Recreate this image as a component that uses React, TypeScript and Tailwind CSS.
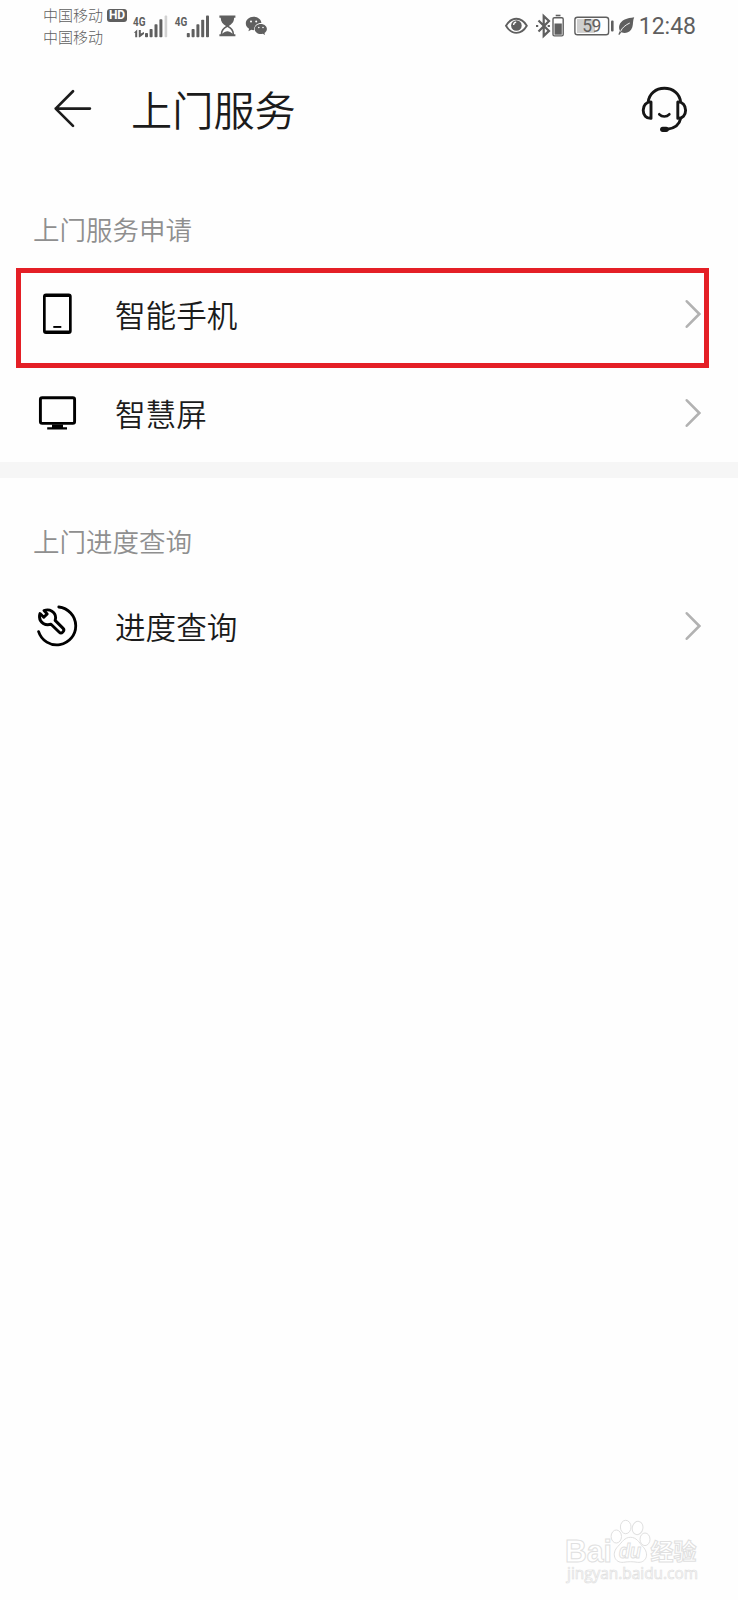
import type { ReactNode } from "react";

function CarrierSignals() {
  return (
    <svg className="ml-[4px] h-[28px] w-[78px]" viewBox="131 11 78 28" fill="#5f5f5f">
      <text x="133" y="25" fontSize="13" fontWeight="700" textLength="12.500" lengthAdjust="spacingAndGlyphs" fontFamily="Roboto, sans-serif">4G</text>
      <path d="M133.800 31.800l3.400-3.200V36.200h-2v-4.500zM138.800 28.900h2V32.600l3.200-1.600v2L139.800 36.200h-1z" />
      <rect x="145" y="32" width="3" height="4.200" rx=".8" />
      <rect x="149.600" y="28" width="3" height="8.200" rx=".8" />
      <rect x="154.500" y="23.300" width="3" height="12.900" rx=".8" />
      <rect x="159.400" y="18.300" width="3" height="17.900" rx=".8" />
      <rect x="164.600" y="14.600" width="2.600" height="21.600" rx=".8" fill="#d2d2d2" />
      <text x="174.800" y="25" fontSize="13" fontWeight="700" textLength="12.500" lengthAdjust="spacingAndGlyphs" fontFamily="Roboto, sans-serif">4G</text>
      <rect x="186.800" y="32" width="3" height="4.200" rx=".8" />
      <rect x="191.600" y="28" width="3" height="8.200" rx=".8" />
      <rect x="196.400" y="23.300" width="3" height="12.900" rx=".8" />
      <rect x="201.200" y="18.800" width="3" height="17.400" rx=".8" />
      <rect x="206" y="14.600" width="3" height="21.600" rx=".8" />
    </svg>
  );
}

function Hourglass() {
  return (
    <svg className="ml-[10px] h-[22px] w-[17px]" viewBox="219 15 17 22" fill="#5f5f5f">
      <path d="M219.400 15.600h16v2.200h-1.300c0 4-2.200 6.400-5.300 8.200 3.100 1.800 5.300 4.200 5.300 8.200h1.300v2h-16v-2h1.300c0-4 2.200-6.400 5.300-8.200-3.100-1.800-5.300-4.200-5.300-8.200h-1.300z" />
      <path d="M222.200 33.800c.2-3 2.400-5.300 5.200-6.800 2.800 1.500 5 3.800 5.200 6.800-1.700-1.700-3.300-2.600-5.200-2.600s-3.500.9-5.200 2.600z" fill="#fff" />
    </svg>
  );
}

function ChatBubbles() {
  return (
    <svg className="ml-[9px] h-[20px] w-[23px]" viewBox="245 16 23 20" fill="#5f5f5f">
      <path d="M253.500 16.800c4.400 0 7.700 2.800 7.900 6.200-4.500 0-7.700 2.900-7.200 7.100-1 .1-1.900 0-2.900-.3l-2.900 1.500.7-2.500c-2-1.200-3.300-3-3.300-5.300 0-3.700 3.400-6.700 7.700-6.700z" />
      <path d="M260.800 23.900c3.400 0 6.100 2.200 6.100 5 0 1.700-1 3.100-2.400 4.100l.5 1.900-2.200-1.200c-4.400 1-8.100-1.500-8.100-4.800 0-2.800 2.700-5 6.100-5z" />
      <g fill="#fff">
        <circle cx="251" cy="21.500" r="1" />
        <circle cx="256.200" cy="21.500" r="1" />
        <circle cx="258.800" cy="27.500" r=".8" />
        <circle cx="263" cy="27.500" r=".8" />
      </g>
    </svg>
  );
}

function StatusRight() {
  return (
    <svg className="h-[28px] w-[132px]" viewBox="504 11.500 132 28" fill="none" stroke="#5f5f5f">
      <path d="M506 25.300c5.400-9.400 15.400-9.400 20.800 0-5.400 9.400-15.400 9.400-20.800 0z" strokeWidth="1.900" />
      <circle cx="516.400" cy="25" r="5.300" fill="#5f5f5f" stroke="none" />
      <path d="M513.600 24.500a3 3 0 0 1 2.600-2.800" stroke="#fff" strokeWidth="1.300" />
      <path d="M538.500 20l10.500 10.400-5.300 5V15.600l5.300 4.900L538.500 31" strokeWidth="2.200" />
      <path d="M536 25.500h2.200M547.700 25.500h2.200" strokeWidth="2" />
      <rect x="553" y="17.200" width="10.200" height="18.200" rx="1.400" strokeWidth="1.400" />
      <path d="M555.700 15h4.800" strokeWidth="1.600" />
      <path d="M554.500 23h7.300v11.200h-7.300z" fill="#5f5f5f" stroke="none" />
      <rect x="574.900" y="16.700" width="33.700" height="17.600" rx="2.600" strokeWidth="1.400" />
      <path d="M577 18.600h18v13.800h-18z" fill="#cfcfcf" stroke="none" />
      <rect x="611" y="20" width="2.600" height="11" rx="1" fill="#5f5f5f" stroke="none" />
      <text x="582.300" y="31.500" fontSize="17.500" textLength="19" fontFamily="Roboto, sans-serif" fill="#5f5f5f" stroke="none">59</text>
      <path d="M634.200 16.800c-7 .9-13.200 2.500-14.900 8.200-.6 2 0 4 .6 5.300l-1.600 3.700 1.300.2 1.600-2.500c5 2 9.400-.2 11.100-5 1.100-3.200.3-6.500 1.900-9.900z" fill="#5f5f5f" stroke="none" />
      <path d="M620.500 31c1.800-4 5-6.500 9.300-8.500" stroke="#fff" strokeWidth=".9" />
    </svg>
  );
}

function BackArrow() {
  return (
    <svg className="h-[40px] w-[40px]" viewBox="53.500 89 40 40" fill="none" stroke="#1c1c1c" strokeWidth="2.700" strokeLinecap="round" strokeLinejoin="round">
      <path d="M73.500 91.300L56.200 108.600l17.300 17.300M56.200 108.600h34.200" />
    </svg>
  );
}

function Headset() {
  return (
    <svg className="h-[48px] w-[50px]" viewBox="639 85 50 48" fill="none" stroke="#161616" strokeWidth="2.900" strokeLinejoin="round">
      <path d="M648.200 102c.8-8.200 7.500-13.800 16.200-13.800s15.400 5.600 16.200 13.800" />
      <path d="M651 101.900v16.500c-4.800.2-7.800-3.400-7.800-8.200s3-8.500 7.800-8.300zM677.800 101.900v16.500c4.800.2 7.800-3.400 7.800-8.200s-3-8.500-7.800-8.300z" />
      <path d="M680.800 118c-1.300 6.300-5.500 10.400-13.600 11.200" />
      <path d="M662.700 129.300h3.500" strokeWidth="5.200" strokeLinecap="round" />
      <path d="M659.300 114.300c2.700 2.900 7.300 2.900 10 0" strokeWidth="2.700" strokeLinecap="round" />
    </svg>
  );
}

function PhoneIcon() {
  return (
    <svg className="h-[42px] w-[42px]" viewBox="36 293 42 42">
      <path fillRule="evenodd" d="M46 293.400h22.700a3 3 0 0 1 3 3v34.700a3 3 0 0 1-3 3H46a3 3 0 0 1-3-3v-34.700a3 3 0 0 1 3-3zM45.700 297v33.400h23.300V297z" />
      <path d="M53.300 326h8v1.900h-8z" />
    </svg>
  );
}

function ScreenIcon() {
  return (
    <svg className="h-[42px] w-[42px]" viewBox="36 392 42 42">
      <rect x="40.400" y="397.800" width="34.200" height="25.600" rx="1.800" fill="none" stroke="#000" strokeWidth="2.900" />
      <path d="M52 424.500h11v2.700h4v2.200H47.200v-2.200H52z" />
    </svg>
  );
}

function RepairIcon() {
  return (
    <svg className="h-[42px] w-[42px]" viewBox="36 604.700 42 42" fill="none" stroke="#000" strokeWidth="2.800" strokeLinecap="round" strokeLinejoin="round">
      <path d="M58.800 606.700a19 19 0 1 1-20.200 24.600" />
      <path strokeWidth="2.900" d="M44 610.300c5.600-2.200 11.600 1.300 11.600 7 0 1-.2 2-.5 2.800l8 8c2.200 2.200-1.600 6-3.800 3.800l-8.300-8c-5.600 1.900-11.200-1.600-11.500-7-.1-1.400.1-2.600.5-3.700l3.800 3.800 3.400-3.400z" />
    </svg>
  );
}

function Chevron() {
  return (
    <svg className="ml-auto h-[30px] w-[18px]" viewBox="0 0 18 30" fill="none" stroke="#b2b2b2" strokeWidth="2.600" strokeLinecap="round" strokeLinejoin="miter">
      <path d="M3.800 2.300L16.300 15 3.800 27.700" />
    </svg>
  );
}

function Row({ icon, label }: { icon: ReactNode; label: string }) {
  return (
    <div className="flex h-[98px] items-center pr-[37px] pl-[36px]">
      {icon}
      <span className="ml-[37px] text-[30.600px] leading-[40px] font-[350] text-[#1b1b1b]">{label}</span>
      <Chevron />
    </div>
  );
}

function SectionLabel({ children }: { children: ReactNode }) {
  return <h2 className="pl-[33px] text-[26.500px] leading-[36px] font-[350] text-[#8f8f8f]">{children}</h2>;
}

function Watermark() {
  return (
    <svg className="mt-auto mr-[36px] mb-[12px] h-[70px] w-[140px] self-end" viewBox="562 1518 140 70" fill="#fff" stroke="#e0e0e0" strokeWidth="1">
      <text x="565" y="1561.500" fontSize="31.500" fontWeight="700" textLength="47" lengthAdjust="spacingAndGlyphs" fontFamily="Liberation Sans, sans-serif">Bai</text>
      <ellipse cx="616.300" cy="1536.500" rx="5.200" ry="6.500" />
      <ellipse cx="625.700" cy="1527" rx="5.300" ry="6.700" />
      <ellipse cx="637.600" cy="1528" rx="5.300" ry="6.700" transform="rotate(12 637.600 1528)" />
      <ellipse cx="645" cy="1539.300" rx="5" ry="6.300" />
      <path d="M630.500 1537.300c6 0 8.500 5 12 9 8 8 3 17-5 16-5-.8-9-.8-14 0-9 1-12.500-9-5.500-16 4-4 6.500-9 12.500-9z" />
      <text x="619" y="1558" fontSize="20" fontWeight="700" fontStyle="italic" textLength="22" lengthAdjust="spacingAndGlyphs" fontFamily="Liberation Sans, sans-serif">du</text>
      <text x="650.500" y="1560" fontSize="23" fontWeight="700" textLength="46" fontFamily="Noto Sans CJK SC, sans-serif">经验</text>
      <text x="567" y="1579" fontSize="16" textLength="131" lengthAdjust="spacingAndGlyphs" strokeWidth=".7" fontFamily="Open Sans, sans-serif">jingyan.baidu.com</text>
    </svg>
  );
}

export default function App() {
  return (
    <div className="flex h-[1600px] w-[738px] flex-col bg-[#fefefe] font-['Noto_Sans_CJK_SC',sans-serif]">
      <header className="flex h-[51px] items-center pr-[42px] pl-[43px] text-[#5f5f5f]">
        <div className="pt-px text-[15px] leading-[22px] font-light">
          <div className="flex items-center">
            中国移动
            <span className="ml-[4px] flex h-[13px] w-[20px] items-center justify-center rounded-[3px] bg-[#5f5f5f] font-[Roboto,sans-serif] text-[12px] leading-[13px] font-bold text-white">HD</span>
          </div>
          <div>中国移动</div>
        </div>
        <CarrierSignals />
        <Hourglass />
        <ChatBubbles />
        <div className="ml-auto flex items-center">
          <StatusRight />
          <time className="ml-[3px] pt-[3px] font-[Roboto,sans-serif] text-[23px] leading-[28px]">12:48</time>
        </div>
      </header>
      <div className="flex h-[115px] items-center pr-[49px] pl-[53px]">
        <BackArrow />
        <h1 className="-mt-[2px] ml-[38px] text-[41.200px] leading-[54px] font-[350] text-[#1b1b1b]">上门服务</h1>
        <div className="ml-auto">
          <Headset />
        </div>
      </div>
      <section className="h-[296px] pt-[45px]">
        <SectionLabel>上门服务申请</SectionLabel>
        <div className="mt-[21px] mr-[29px] ml-[16px] h-[100px] border-[5.500px] border-[#e41f26]">
          <div className="-mt-[8px] -mr-[34px] -ml-[21px]">
            <Row icon={<PhoneIcon />} label="智能手机" />
          </div>
        </div>
        <div className="-mt-[4px]">
          <Row icon={<ScreenIcon />} label="智慧屏" />
        </div>
      </section>
      <div className="h-[16px] bg-[#f6f6f6]" />
      <section className="pt-[45px]">
        <SectionLabel>上门进度查询</SectionLabel>
        <div className="mt-[18px]">
          <Row icon={<RepairIcon />} label="进度查询" />
        </div>
      </section>
      <Watermark />
    </div>
  );
}
